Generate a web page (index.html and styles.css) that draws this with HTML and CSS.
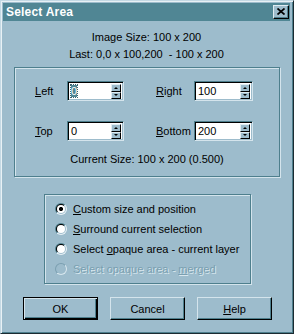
FILE: index.html
```html
<!doctype html>
<html lang="en">
<head>
    <meta charset="utf-8"/>
    <title>Select Area</title>
    <link rel="stylesheet" href="styles.css">
</head>
<body>

    <!--dialog window-->
    <div class="window">
        <!--title bar-->
        <div class="titlebar">
            <span class="title">Select Area</span>
            <button class="close">
                <svg width="8" height="7" viewBox="0 0 8 7"><path d="M0.5 0.5 L7.5 6.5 M7.5 0.5 L0.5 6.5" stroke="#000" stroke-width="1.7" fill="none"/></svg>
            </button>
        </div>

        <!--image info-->
        <div class="info">
            <p>Image Size: 100 x 200</p>
            <p>Last: 0,0 x 100,200&nbsp; - 100 x 200</p>
        </div>

        <!--size fields-->
        <div class="group size-group">
            <div class="fields">
                <span class="lbl"><u>L</u>eft</span>
                <div class="spin"><span class="val"><span class="sel">0</span></span><span class="arrows"><span class="up"></span><span class="down"></span></span></div>
                <span class="lbl"><u>R</u>ight</span>
                <div class="spin wide"><span class="val">100</span><span class="arrows"><span class="up"></span><span class="down"></span></span></div>
                <span class="lbl"><u>T</u>op</span>
                <div class="spin"><span class="val">0</span><span class="arrows"><span class="up"></span><span class="down"></span></span></div>
                <span class="lbl"><u>B</u>ottom</span>
                <div class="spin wide"><span class="val">200</span><span class="arrows"><span class="up"></span><span class="down"></span></span></div>
            </div>
            <p class="current">Current Size: 100 x 200 (0.500)</p>
        </div>

        <!--selection mode-->
        <div class="group mode-group">
            <div class="opt"><span class="radio checked"></span><span><u>C</u>ustom size and position</span></div>
            <div class="opt"><span class="radio"></span><span><u>S</u>urround current selection</span></div>
            <div class="opt"><span class="radio"></span><span>Select <u>o</u>paque area - current layer</span></div>
            <div class="opt disabled"><span class="radio"></span><span>Select opaque area - <u>m</u>erged</span></div>
        </div>

        <!--buttons-->
        <div class="buttons">
            <button class="btn default">OK</button>
            <button class="btn">Cancel</button>
            <button class="btn"><u>H</u>elp</button>
        </div>
    </div>

</body>
</html>
```

FILE: styles.css
```css
* {
    padding: 0;
    margin: 0;
    box-sizing: border-box;
}

body {
    background: #9dbccc;
    font-family: "Liberation Sans", Arial, sans-serif;
    font-size: 11px;
    color: #000;
}

.window {
    width: 294px;
    height: 334px;
    background: #9dbccc;
    border: 1px solid;
    border-color: #c4d9e4 #1b2b31 #1b2b31 #c4d9e4;
    box-shadow: inset 1px 1px 0 #e8f1f5, inset -1px -1px 0 #4e7f8d;
    padding: 2px 3px 2px 2px;
}

.titlebar {
    height: 18px;
    background: #508694;
    display: flex;
    align-items: center;
    justify-content: space-between;
    padding: 0 1px 0 3px;
}

.title {
    color: #fff;
    font-weight: bold;
    font-size: 12px;
    letter-spacing: 0.2px;
}

.close {
    width: 16px;
    height: 14px;
    background: #9dbccc;
    border: 1px solid;
    border-color: #e0ecf2 #000 #000 #e0ecf2;
    box-shadow: inset -1px -1px 0 #4e7f8d;
    display: flex;
    align-items: center;
    justify-content: center;
    padding-bottom: 1px;
}

.info {
    margin-top: 8px;
    text-align: center;
    line-height: 17px;
}

.group {
    border: 1px solid #4e7f8d;
    box-shadow: inset 1px 1px 0 #d4e4ec, 1px 1px 0 #d4e4ec;
}

.size-group {
    margin: 4px 10px 0 11px;
    height: 110px;
    padding: 13px 0 0 20px;
}

.fields {
    display: grid;
    grid-template-columns: 32px 89px 38px 59px;
    grid-template-rows: 20px 20px;
    row-gap: 20px;
    align-items: center;
}

.lbl u,
.opt u,
.btn u {
    text-decoration: underline;
}

.spin {
    width: 57px;
    height: 20px;
    background: #fff;
    border: 1px solid;
    border-color: #4e7f8d #d4e4ec #d4e4ec #4e7f8d;
    box-shadow: inset 1px 1px 0 #000, inset -1px -1px 0 #9dbccc;
    display: flex;
    padding: 2px 2px 1px 2px;
}

.spin.wide {
    width: 59px;
}

.val {
    flex: 1;
    line-height: 15px;
    padding-left: 1px;
}

.sel {
    background: #508694;
    color: #fff;
    outline: 1px dotted #3a6470;
}

.arrows {
    width: 10px;
    display: flex;
    flex-direction: column;
}

.arrows span {
    flex: 1;
    background: #9dbccc;
    border: 1px solid;
    border-color: #e0ecf2 #000 #000 #e0ecf2;
    display: flex;
    align-items: center;
    justify-content: center;
}

.arrows .up::after,
.arrows .down::after {
    content: "";
    width: 0;
    height: 0;
    border-left: 2.5px solid transparent;
    border-right: 2.5px solid transparent;
}

.arrows .up::after {
    border-bottom: 2px solid #000;
}

.arrows .down::after {
    border-top: 2px solid #000;
}

.current {
    margin: 10px 0 0 -20px;
    text-align: center;
    line-height: 17px;
}

.mode-group {
    margin: 17px 0 0 41px;
    width: 207px;
    height: 90px;
    padding: 4px 0 0 10px;
}

.opt {
    height: 20px;
    display: flex;
    align-items: center;
    gap: 6px;
}

.radio {
    width: 12px;
    height: 12px;
    border-radius: 50%;
    background: linear-gradient(135deg, #4e7f8d 50%, #e6f0f5 50%);
    position: relative;
}

.radio::before {
    content: "";
    position: absolute;
    left: 1px;
    top: 1px;
    width: 10px;
    height: 10px;
    border-radius: 50%;
    background: linear-gradient(135deg, #000 50%, #9dbccc 50%);
}

.radio::after {
    content: "";
    position: absolute;
    left: 2px;
    top: 2px;
    width: 8px;
    height: 8px;
    border-radius: 50%;
    background: #fff;
}

.radio.checked::after {
    background: radial-gradient(circle, #000 0 2px, #fff 2.2px);
}

.opt.disabled {
    color: #7a9fb0;
    text-shadow: 1px 1px 0 #d8e7ee;
}

.opt.disabled .radio {
    background: linear-gradient(135deg, #7a9fb0 50%, #d8e7ee 50%);
}

.opt.disabled .radio::before,
.opt.disabled .radio::after {
    background: #9dbccc;
}

.buttons {
    margin: 13px 0 0 20px;
    display: flex;
    gap: 12px;
}

.btn {
    width: 75px;
    height: 23px;
    background: #9dbccc;
    font-family: "Liberation Sans", Arial, sans-serif;
    font-size: 11px;
    color: #000;
    border: 1px solid;
    border-color: #d4e4ec #000 #000 #d4e4ec;
    box-shadow: inset -1px -1px 0 #4e7f8d;
}

.btn.default {
    border-color: #000;
    box-shadow: inset 1px 1px 0 #d4e4ec, inset -1px -1px 0 #000, inset -2px -2px 0 #4e7f8d;
}
```
